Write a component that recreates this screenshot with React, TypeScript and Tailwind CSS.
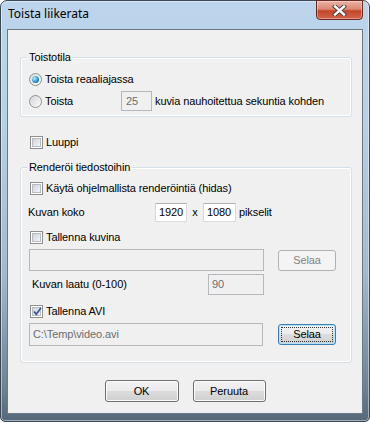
import type { ReactNode } from 'react';

function Check({ checked = false }: { checked?: boolean }) {
  return (
    <span className="relative w-[13px] h-[13px] shrink-0 border border-[#8e8f8f] bg-white p-px">
      <span className="block w-full h-full border border-[#b7bcc2] bg-[linear-gradient(135deg,#cfd3d9,#f4f5f6)]" />
      {checked && (
        <svg className="absolute left-[1px] top-[0px]" width="11" height="11" viewBox="0 0 11 11">
          <path d="M2 5.5 L4.3 8.2 L9 1.8" fill="none" stroke="#3c5a98" strokeWidth="1.8" />
        </svg>
      )}
    </span>
  );
}

function Radio({ checked = false }: { checked?: boolean }) {
  return (
    <span className="w-[13px] h-[13px] shrink-0 rounded-full border border-[#8e8f8f] bg-[linear-gradient(135deg,#d7d9dc,#ffffff)] flex items-center justify-center">
      {checked ? (
        <span className="w-[7px] h-[7px] rounded-full bg-[radial-gradient(circle_at_35%_35%,#b7ecff,#2f93d9_55%,#0b3f78)]" />
      ) : (
        <span className="w-[9px] h-[9px] rounded-full bg-[linear-gradient(135deg,#d4d6d9,#f9f9f9)]" />
      )}
    </span>
  );
}

function Btn({ children, className, kind = 'normal' }: { children: ReactNode; className: string; kind?: 'normal' | 'disabled' | 'focus' }) {
  if (kind === 'disabled') {
    return (
      <div className={`${className} rounded-[3px] border border-[#adb2b5] bg-[#f4f4f4] text-[#838383] flex items-center justify-center`}>
        {children}
      </div>
    );
  }
  if (kind === 'focus') {
    return (
      <div className={`${className} rounded-[3px] border border-[#3c7fb1] bg-[linear-gradient(#f2f2f2,#ebebeb_50%,#dddddd_50%,#cfcfcf)] shadow-[inset_0_0_0_1px_#aee3fa] p-[2px] flex`}>
        <span className="flex-1 border border-dotted border-[#333] flex items-center justify-center text-black">{children}</span>
      </div>
    );
  }
  return (
    <div className={`${className} rounded-[3px] border border-[#707070] bg-[linear-gradient(#f2f2f2,#ebebeb_50%,#dddddd_50%,#cfcfcf)] shadow-[inset_0_0_0_1px_#fbfbfb] flex items-center justify-center text-black`}>
      {children}
    </div>
  );
}

function Group({ title, className, children }: { title: string; className: string; children: ReactNode }) {
  return (
    <div className={`${className} relative w-[332px] rounded-[3px] border border-[#d5dfe5] shadow-[inset_0_0_0_1px_#ffffff]`}>
      <span className="absolute -top-[7px] left-[6px] px-[2px] bg-[#f0f0f0] leading-[13px]">{title}</span>
      {children}
    </div>
  );
}

export default function App() {
  return (
    <div className="w-[370px] h-[422px] flex flex-col rounded-t-[7px] rounded-b-[5px] border border-[#3b4957] bg-[linear-gradient(#bcd4ec,#b8cfe8_30%,#a3b9d0_65%,#6e8294_92%,#55687a)] shadow-[inset_0_0_0_1px_rgba(255,255,255,0.45)] font-['Liberation_Sans',Arial,sans-serif] text-[11px] tracking-[-0.1px] text-black">
      <div className="h-[28px] flex items-start justify-between">
        <span className="pl-[7px] pt-[5px] text-[12px] leading-[16px] tracking-normal font-['Noto_Sans',sans-serif]">Toista liikerata</span>
        <div className="-mt-px mr-[6px] w-[47px] h-[20px] rounded-b-[4px] border border-[#6b2a1f] bg-[linear-gradient(#eab3a6,#dc8672_45%,#c4452b_55%,#d4654b)] shadow-[inset_0_0_0_1px_rgba(255,255,255,0.35)] flex items-center justify-center">
          <svg width="15" height="11" viewBox="0 0 15 11">
            <path d="M3 1.5 L12 9.5 M12 1.5 L3 9.5" stroke="#4a3a36" strokeWidth="4.2" strokeLinecap="square" />
            <path d="M3 1.5 L12 9.5 M12 1.5 L3 9.5" stroke="#ffffff" strokeWidth="2.4" strokeLinecap="square" />
          </svg>
        </div>
      </div>

      <div className="mx-[6px] h-[385px] border border-[#6b7886] bg-[#f0f0f0] flex flex-col pl-[12px]">
        <Group title="Toistotila" className="mt-[27px] h-[60px] pt-[11px] pl-[8px]">
          <div className="h-[20px] flex items-center gap-[3px]">
            <Radio checked />
            <span>Toista reaaliajassa</span>
          </div>
          <div className="mt-[2px] h-[20px] flex items-center">
            <Radio />
            <span className="ml-[3px] w-[76px]">Toista</span>
            <div className="w-[31px] h-[20px] border border-[#b5b7bc] bg-[#f0f0f0] text-[#6d6d6d] pl-[4px] flex items-center">25</div>
            <span className="ml-[3px]">kuvia nauhoitettua sekuntia kohden</span>
          </div>
        </Group>

        <div className="mt-[15px] h-[20px] pl-[10px] flex items-center gap-[3px]">
          <Check />
          <span>Luuppi</span>
        </div>

        <Group title="Renderöi tiedostoihin" className="mt-[15px] h-[196px] pt-[10px] pl-[8px]">
          <div className="h-[20px] pl-[1px] flex items-center gap-[3px]">
            <Check />
            <span>Käytä ohjelmallista renderöintiä (hidas)</span>
          </div>
          <div className="mt-[4px] h-[20px] flex items-center">
            <span className="w-[126px] -ml-px">Kuvan koko</span>
            <div className="ml-px w-[32px] h-[19px] border border-[#d8dadf] border-t-[#aeb0b6] bg-white px-[3px] flex items-center">1920</div>
            <span className="w-[16px] text-center">x</span>
            <div className="w-[33px] h-[19px] border border-[#d8dadf] border-t-[#aeb0b6] bg-white px-[3px] flex items-center">1080</div>
            <span className="ml-[3px]">pikselit</span>
          </div>
          <div className="mt-[5px] h-[20px] pl-[1px] flex items-center gap-[3px]">
            <Check />
            <span>Tallenna kuvina</span>
          </div>
          <div className="mt-[2px] h-[22px] flex items-center">
            <div className="w-[235px] h-[22px] border border-[#b5b7bc] bg-[#f0f0f0]" />
            <Btn kind="disabled" className="ml-[14px] w-[58px] h-[21px]">Selaa</Btn>
          </div>
          <div className="mt-[3px] h-[21px] flex items-center">
            <span className="pl-[3px] w-[179px]">Kuvan laatu (0-100)</span>
            <div className="w-[56px] h-[21px] border border-[#b5b7bc] bg-[#f0f0f0] text-[#6d6d6d] px-[3px] flex items-center">90</div>
          </div>
          <div className="mt-[6px] h-[20px] pl-[1px] flex items-center gap-[3px]">
            <Check checked />
            <span>Tallenna AVI</span>
          </div>
          <div className="mt-[2px] h-[23px] flex items-center">
            <div className="w-[234px] h-[23px] border border-[#b5b7bc] bg-[#f0f0f0] text-[#6d6d6d] px-[3px] flex items-center">C:\Temp\video.avi</div>
            <Btn kind="focus" className="ml-[15px] w-[58px] h-[21px]">Selaa</Btn>
          </div>
        </Group>

        <div className="mt-[17px] -ml-[12px] flex justify-center gap-[14px]">
          <Btn className="w-[74px] h-[22px]">OK</Btn>
          <Btn className="w-[73px] h-[22px]">Peruuta</Btn>
        </div>
      </div>
    </div>
  );
}
